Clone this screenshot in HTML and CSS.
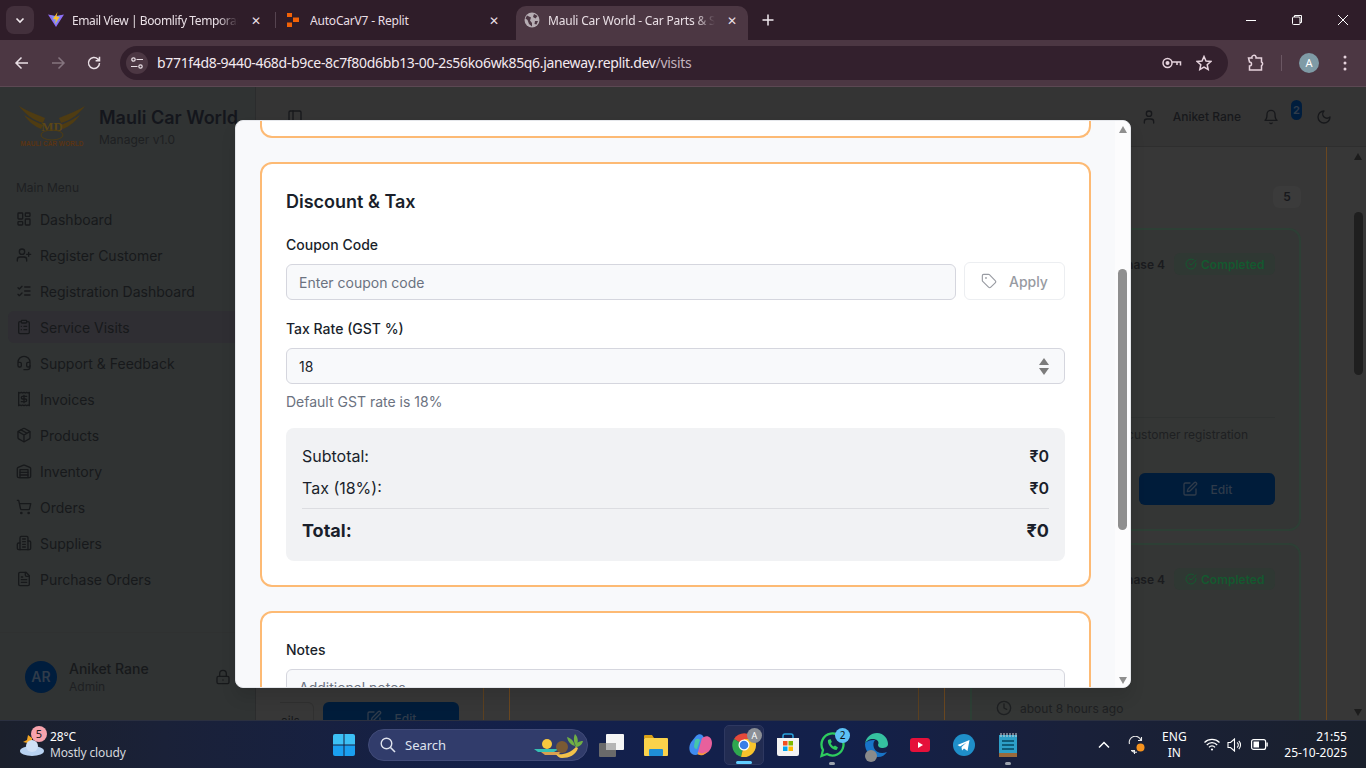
FILE: index.html
```html
<!DOCTYPE html>
<html lang="en">
<head>
    <meta charset="UTF-8">
    <meta name="viewport" content="width=device-width, initial-scale=1.0">
    <title>Mauli Car World - Car Parts &amp; Service</title>
    <link rel="stylesheet" href="styles.css">
</head>
<body>
    <svg class="sprite" xmlns="http://www.w3.org/2000/svg">
        <symbol id="i-dashboard" viewBox="0 0 24 24"><rect x="3" y="3" width="7" height="9" rx="1"/><rect x="14" y="3" width="7" height="5" rx="1"/><rect x="14" y="12" width="7" height="9" rx="1"/><rect x="3" y="16" width="7" height="5" rx="1"/></symbol>
        <symbol id="i-user-plus" viewBox="0 0 24 24"><path d="M16 21v-2a4 4 0 0 0-4-4H6a4 4 0 0 0-4 4v2"/><circle cx="9" cy="7" r="4"/><path d="M19 8v6M22 11h-6"/></symbol>
        <symbol id="i-list-checks" viewBox="0 0 24 24"><path d="m3 17 2 2 4-4M3 7l2 2 4-4M13 6h8M13 12h8M13 18h8"/></symbol>
        <symbol id="i-clipboard" viewBox="0 0 24 24"><rect x="8" y="2" width="8" height="4" rx="1"/><path d="M16 4h2a2 2 0 0 1 2 2v14a2 2 0 0 1-2 2H6a2 2 0 0 1-2-2V6a2 2 0 0 1 2-2h2M12 11h4M12 16h4M8 11h.01M8 16h.01"/></symbol>
        <symbol id="i-headset" viewBox="0 0 24 24"><path d="M3 11h3a2 2 0 0 1 2 2v3a2 2 0 0 1-2 2H5a2 2 0 0 1-2-2v-5Zm0 0a9 9 0 1 1 18 0m0 0v5a2 2 0 0 1-2 2h-1a2 2 0 0 1-2-2v-3a2 2 0 0 1 2-2h3Z"/><path d="M21 16v2a4 4 0 0 1-4 4h-5"/></symbol>
        <symbol id="i-receipt" viewBox="0 0 24 24"><path d="M4 2v20l2-1 2 1 2-1 2 1 2-1 2 1 2-1 2 1V2l-2 1-2-1-2 1-2-1-2 1-2-1-2 1Z"/><path d="M16 8h-6a2 2 0 1 0 0 4h4a2 2 0 1 1 0 4H8M12 17.5v-11"/></symbol>
        <symbol id="i-package" viewBox="0 0 24 24"><path d="M11 21.73a2 2 0 0 0 2 0l7-4A2 2 0 0 0 21 16V8a2 2 0 0 0-1-1.73l-7-4a2 2 0 0 0-2 0l-7 4A2 2 0 0 0 3 8v8a2 2 0 0 0 1 1.73z"/><path d="M12 22V12M3.29 7 12 12l8.71-5M7.5 4.27l9 5.15"/></symbol>
        <symbol id="i-warehouse" viewBox="0 0 24 24"><path d="M22 8.35V20a2 2 0 0 1-2 2H4a2 2 0 0 1-2-2V8.35A2 2 0 0 1 3.26 6.5l8-3.2a2 2 0 0 1 1.48 0l8 3.2A2 2 0 0 1 22 8.35Z"/><path d="M6 18h12M6 14h12"/><rect x="6" y="10" width="12" height="12"/></symbol>
        <symbol id="i-cart" viewBox="0 0 24 24"><circle cx="8" cy="21" r="1"/><circle cx="19" cy="21" r="1"/><path d="M2.05 2.05h2l2.66 12.42a2 2 0 0 0 2 1.58h9.78a2 2 0 0 0 1.95-1.57l1.65-7.43H5.12"/></symbol>
        <symbol id="i-building" viewBox="0 0 24 24"><path d="M6 22V4a2 2 0 0 1 2-2h8a2 2 0 0 1 2 2v18Z"/><path d="M6 12H4a2 2 0 0 0-2 2v6a2 2 0 0 0 2 2h2M18 9h2a2 2 0 0 1 2 2v9a2 2 0 0 1-2 2h-2M10 6h4M10 10h4M10 14h4M10 18h4"/></symbol>
        <symbol id="i-file" viewBox="0 0 24 24"><path d="M15 2H6a2 2 0 0 0-2 2v16a2 2 0 0 0 2 2h12a2 2 0 0 0 2-2V7Z"/><path d="M14 2v4a2 2 0 0 0 2 2h4M10 9H8M16 13H8M16 17H8"/></symbol>
        <symbol id="i-lock" viewBox="0 0 24 24"><rect x="3" y="11" width="18" height="11" rx="2"/><path d="M7 11V7a5 5 0 0 1 10 0v4M12 16.5h.01"/></symbol>
        <symbol id="i-user" viewBox="0 0 24 24"><path d="M19 21v-2a4 4 0 0 0-4-4H9a4 4 0 0 0-4 4v2"/><circle cx="12" cy="7" r="4"/></symbol>
        <symbol id="i-bell" viewBox="0 0 24 24"><path d="M6 8a6 6 0 0 1 12 0c0 7 3 9 3 9H3s3-2 3-9M10.3 21a1.94 1.94 0 0 0 3.4 0"/></symbol>
        <symbol id="i-moon" viewBox="0 0 24 24"><path d="M12 3a6 6 0 0 0 9 9 9 9 0 1 1-9-9Z"/></symbol>
        <symbol id="i-panel" viewBox="0 0 24 24"><rect x="3" y="3" width="18" height="18" rx="2"/><path d="M9 3v18"/></symbol>
        <symbol id="i-tag" viewBox="0 0 24 24"><path d="M12.586 2.586A2 2 0 0 0 11.172 2H4a2 2 0 0 0-2 2v7.172a2 2 0 0 0 .586 1.414l8.704 8.704a2.426 2.426 0 0 0 3.42 0l6.58-6.58a2.426 2.426 0 0 0 0-3.42z"/><circle cx="7.5" cy="7.5" r=".5"/></symbol>
        <symbol id="i-check" viewBox="0 0 24 24"><path d="M21.801 10A10 10 0 1 1 17 3.335M9 11l3 3L22 4"/></symbol>
        <symbol id="i-edit" viewBox="0 0 24 24"><path d="M12 3H5a2 2 0 0 0-2 2v14a2 2 0 0 0 2 2h14a2 2 0 0 0 2-2v-7"/><path d="M18.375 2.625a1 1 0 0 1 3 3l-9.013 9.014a2 2 0 0 1-.853.505l-2.873.84a.5.5 0 0 1-.62-.62l.84-2.873a2 2 0 0 1 .506-.852z"/></symbol>
        <symbol id="i-clock" viewBox="0 0 24 24"><circle cx="12" cy="12" r="10"/><path d="M12 6v6l4 2"/></symbol>
    </svg>

    <!-- browser tabs -->
    <div class="tabstrip">
        <div class="tab-search">
            <svg width="12" height="12" viewBox="0 0 12 12"><path d="M2.5 4.5 6 8l3.5-3.5" fill="none" stroke="#f1e9ee" stroke-width="1.6"/></svg>
        </div>
        <div class="tab tab-first">
            <svg class="favicon" width="16" height="16" viewBox="0 0 16 16"><path d="M0 2.5 8 15 16 2.5 8 4Z" fill="#8f6cf6"/><path d="M3 3.5 8 13l5-9.5-5 1Z" fill="#5ecbf5" opacity=".45"/><path d="M9.5 0 5 7l3 .6L7 12l4.500-7-3-.4Z" fill="#fbc02d"/></svg>
            <span class="tab-title">Email View | Boomlify Temporary Mail</span>
            <span class="tab-close">✕</span>
        </div>
        <div class="tab-sep"></div>
        <div class="tab tab-second">
            <svg class="favicon" width="16" height="16" viewBox="0 0 16 16"><path d="M2 1h5v4H2ZM8 5.500h6V10H8ZM2 10.500h5V15H2Z" fill="#f26207"/></svg>
            <span class="tab-title">AutoCarV7 - Replit</span>
            <span class="tab-close">✕</span>
        </div>
        <div class="tab tab-active">
            <svg class="favicon" width="16" height="16" viewBox="0 0 16 16"><circle cx="8" cy="8" r="7.500" fill="#b6adb3"/><path d="M3 3.500 7 5.500 6 8.500 8 11v3.500L5 12 3.500 8 1.500 6.500ZM10 2l3.500 2-2 2.500-2.500-1.500ZM11 9h3l-1.500 3.500L10.500 12Z" fill="#4c3743"/></svg>
            <span class="tab-title">Mauli Car World - Car Parts &amp; Service</span>
            <span class="tab-close">✕</span>
        </div>
        <div class="tab-new">
            <svg width="12" height="12" viewBox="0 0 12 12"><path d="M6 .5v11M.5 6h11" stroke="#f1e9ee" stroke-width="1.500"/></svg>
        </div>
        <div class="win-controls">
            <svg width="12" height="12" viewBox="0 0 12 12"><path d="M1 6.500h10" stroke="#fff"/></svg>
            <svg width="12" height="12" viewBox="0 0 12 12"><rect x="1.500" y="3" width="7.500" height="7.500" rx="1" fill="none" stroke="#fff"/><path d="M3.500 3V1.500h7V8.500H9" fill="none" stroke="#fff"/></svg>
            <svg width="12" height="12" viewBox="0 0 12 12"><path d="M1 1l10 10M11 1 1 11" stroke="#fff"/></svg>
        </div>
    </div>

    <!-- browser toolbar -->
    <div class="toolbar">
        <svg class="tool-btn" width="16" height="16" viewBox="0 0 16 16"><path d="M14 8H2.500M7.500 2.500 2 8l5.500 5.500" fill="none" stroke="#e9dfe5" stroke-width="1.500"/></svg>
        <svg class="tool-btn" width="16" height="16" viewBox="0 0 16 16"><path d="M2 8h11.500M8.500 2.500 14 8l-5.500 5.500" fill="none" stroke="#85757f" stroke-width="1.500"/></svg>
        <svg class="tool-btn" width="16" height="16" viewBox="0 0 16 16"><path d="M13.500 8a5.500 5.500 0 1 1-1.600-3.900L13.500 5.700M13.500 1.800v3.900H9.600" fill="none" stroke="#e9dfe5" stroke-width="1.500"/></svg>
        <div class="omnibox">
            <div class="site-info">
                <svg width="14" height="14" viewBox="0 0 14 14"><g fill="none" stroke="#e9dfe5" stroke-width="1.200"><circle cx="3.500" cy="3.500" r="1.700"/><path d="M6.500 3.500H13M1 10.500h6.500"/><circle cx="10.500" cy="10.500" r="1.700"/></g></svg>
            </div>
            <span class="url">b771f4d8-9440-468d-b9ce-8c7f80d6bb13-00-2s56ko6wk85q6.janeway.replit.dev<span class="url-path">/visits</span></span>
            <svg class="omni-icon" width="20" height="12" viewBox="0 0 20 12"><g fill="none" stroke="#e6d3dd" stroke-width="1.500"><circle cx="5.500" cy="6" r="4.500"/><path d="M10 5h8.500v3.500M15 5v3"/></g><circle cx="5.500" cy="6" r="2" fill="#e6d3dd"/></svg>
            <svg class="omni-icon star" width="16" height="16" viewBox="0 0 16 16"><path d="m8 1.500 2 4.500 4.800.5-3.600 3.200 1 4.800L8 12.100l-4.200 2.400 1-4.800L1.200 6.500 6 6Z" fill="none" stroke="#e6d3dd" stroke-width="1.500"/></svg>
        </div>
        <svg class="ext-icon" width="18" height="18" viewBox="0 0 18 18"><path d="M2.500 4H6a2 2 0 0 1 4-1.200V4h5.500v4a2 2 0 0 1 0 3.600V16h-12v-4a2 2 0 0 0 0-4Z" fill="none" stroke="#e6d3dd" stroke-width="1.500"/></svg>
        <div class="tool-sep"></div>
        <div class="profile">A</div>
        <svg class="menu-dots" width="4" height="16" viewBox="0 0 4 16"><g fill="#e6d3dd"><circle cx="2" cy="2" r="1.500"/><circle cx="2" cy="8" r="1.500"/><circle cx="2" cy="14" r="1.500"/></g></svg>
    </div>

    <div class="app">
        <aside class="sidebar">
            <div class="brand">
                <svg class="logo" width="68" height="44" viewBox="0 0 68 44">
                    <g fill="#4f3c12">
                        <path d="M1 1c8 5 17 8 26 12l-2 5C15 15 7 9 1 1Z"/>
                        <path d="M6 10c6 4 12 7 19 10l-2 4C16 21 10 16 6 10Z"/>
                        <path d="M67 1c-8 5-17 8-26 12l2 5c10-3 18-9 24-17Z"/>
                        <path d="M62 10c-6 4-12 7-19 10l2 4c7-3 13-8 17-14Z"/>
                    </g>
                    <text x="34" y="26" class="logo-md">MD</text>
                    <ellipse cx="34" cy="30" rx="11" ry="5" fill="none" stroke="#4f3c12"/>
                    <text x="34" y="41" class="logo-name">MAULI CAR WORLD</text>
                </svg>
                <div class="brand-text">
                    <div class="brand-title">Mauli Car World</div>
                    <div class="brand-sub">Manager v1.0</div>
                </div>
            </div>
            <nav class="nav">
                <div class="nav-label">Main Menu</div>
                <a class="nav-item"><svg class="icon"><use href="#i-dashboard"/></svg>Dashboard</a>
                <a class="nav-item"><svg class="icon"><use href="#i-user-plus"/></svg>Register Customer</a>
                <a class="nav-item"><svg class="icon"><use href="#i-list-checks"/></svg>Registration Dashboard</a>
                <a class="nav-item active"><svg class="icon"><use href="#i-clipboard"/></svg>Service Visits</a>
                <a class="nav-item"><svg class="icon"><use href="#i-headset"/></svg>Support &amp; Feedback</a>
                <a class="nav-item"><svg class="icon"><use href="#i-receipt"/></svg>Invoices</a>
                <a class="nav-item"><svg class="icon"><use href="#i-package"/></svg>Products</a>
                <a class="nav-item"><svg class="icon"><use href="#i-warehouse"/></svg>Inventory</a>
                <a class="nav-item"><svg class="icon"><use href="#i-cart"/></svg>Orders</a>
                <a class="nav-item"><svg class="icon"><use href="#i-building"/></svg>Suppliers</a>
                <a class="nav-item"><svg class="icon"><use href="#i-file"/></svg>Purchase Orders</a>
                <div class="nav-label nav-label-next">Management</div>
            </nav>
            <div class="side-user">
                <div class="avatar">AR</div>
                <div class="side-user-text">
                    <div class="side-user-name">Aniket Rane</div>
                    <div class="side-user-role">Admin</div>
                </div>
                <svg class="icon lock"><use href="#i-lock"/></svg>
            </div>
        </aside>

        <main class="main">
            <header class="main-head">
                <svg class="icon panel-btn"><use href="#i-panel"/></svg>
                <svg class="icon"><use href="#i-user"/></svg>
                <span class="head-user">Aniket Rane</span>
                <svg class="icon bell"><use href="#i-bell"/></svg>
                <span class="bell-badge">2</span>
                <svg class="icon moon"><use href="#i-moon"/></svg>
            </header>
            <div class="main-body">
                <div class="board">
                    <section class="col col-a">
                        <div class="visit visit-orange visit-tall">
                            <div class="visit-foot">
                                <span class="btn-details">ails</span>
                                <span class="btn-edit"><svg class="icon"><use href="#i-edit"/></svg>Edit</span>
                            </div>
                        </div>
                    </section>
                    <section class="col col-b">
                        <div class="visit visit-orange visit-tall"></div>
                    </section>
                    <section class="col col-c">
                        <div class="col-head"><span class="count">5</span></div>
                        <div class="visit visit-green">
                            <div class="visit-top">
                                <span class="phase">Phase 4</span>
                                <span class="status"><svg class="icon"><use href="#i-check"/></svg>Completed</span>
                            </div>
                            <div class="visit-note">New customer registration</div>
                            <div class="visit-actions">
                                <span class="btn-edit"><svg class="icon"><use href="#i-edit"/></svg>Edit</span>
                            </div>
                        </div>
                        <div class="visit visit-green visit-last">
                            <div class="visit-top">
                                <span class="phase">Phase 4</span>
                                <span class="status"><svg class="icon"><use href="#i-check"/></svg>Completed</span>
                            </div>
                            <div class="visit-time"><svg class="icon"><use href="#i-clock"/></svg>about 8 hours ago</div>
                        </div>
                    </section>
                </div>
                <div class="page-scroll">
                    <span class="arrow-up"></span>
                    <span class="page-thumb"></span>
                    <span class="arrow-down"></span>
                </div>
            </div>
        </main>

        <!-- dialog over the page -->
        <div class="modal">
            <div class="modal-body">
                <div class="card card-stub"></div>
                <div class="card">
                    <h2 class="card-title">Discount &amp; Tax</h2>
                    <label class="field-label">Coupon Code</label>
                    <div class="coupon-row">
                        <div class="input input-grow placeholder">Enter coupon code</div>
                        <div class="btn-apply"><svg class="icon tag"><use href="#i-tag"/></svg>Apply</div>
                    </div>
                    <label class="field-label tax-label">Tax Rate (GST %)</label>
                    <div class="input input-select">
                        18
                        <span class="spinner"><span class="arrow-up"></span><span class="arrow-down"></span></span>
                    </div>
                    <p class="helper">Default GST rate is 18%</p>
                    <div class="summary">
                        <div class="summary-row"><span>Subtotal:</span><strong>₹0</strong></div>
                        <div class="summary-row"><span>Tax (18%):</span><strong>₹0</strong></div>
                        <div class="summary-row summary-total"><span>Total:</span><span>₹0</span></div>
                    </div>
                </div>
                <div class="card">
                    <label class="field-label notes-label">Notes</label>
                    <div class="input notes placeholder">Additional notes</div>
                </div>
            </div>
            <div class="modal-scroll">
                <span class="arrow-up"></span>
                <span class="modal-thumb"></span>
                <span class="arrow-down"></span>
            </div>
        </div>
    </div>

    <!-- windows taskbar -->
    <footer class="taskbar">
        <div class="weather">
            <div class="weather-icon">
                <svg width="26" height="26" viewBox="0 0 26 26"><path d="M5 11 9 9l1-5 4 3v6Z" fill="#f5a623"/><ellipse cx="14" cy="20" rx="12" ry="5" fill="#b9d3f2"/><circle cx="14" cy="15" r="6" fill="#cfe0f6"/></svg>
                <span class="weather-badge">5</span>
            </div>
            <div class="weather-text">
                <div class="weather-temp">28°C</div>
                <div>Mostly cloudy</div>
            </div>
        </div>
        <div class="slot">
            <svg width="24" height="24" viewBox="0 0 24 24"><g fill="#3cc0f5"><path d="M1 3a2 2 0 0 1 2-2h8.500v10.500H1Z"/><path d="M12.500 1H21a2 2 0 0 1 2 2v8.500H12.500Z"/></g><g fill="#1a9ff0"><path d="M1 12.500h10.500V23H3a2 2 0 0 1-2-2Z"/><path d="M12.500 12.500H23V21a2 2 0 0 1-2 2h-8.500Z"/></g></svg>
        </div>
        <div class="search">
            <svg width="16" height="16" viewBox="0 0 16 16"><circle cx="6.500" cy="6.500" r="5.300" fill="none" stroke="#dfe3ee" stroke-width="1.400"/><path d="m10.500 10.500 4.500 4.500" stroke="#dfe3ee" stroke-width="1.600"/></svg>
            <span>Search</span>
            <svg class="search-art" width="50" height="26" viewBox="0 0 50 26"><path d="M0 17h25l-5 3H4Z" fill="#35c0b4"/><path d="M7 20h20l-3 3H11Z" fill="#d9a050"/><circle cx="13" cy="12" r="5" fill="#f7c83f"/><path d="M41 2c3 3 4 8 1 12-2-3-3-8-1-12ZM49 9c-1 4-4 6-8 6 1-4 4-6 8-6ZM33 5c4 1 7 4 8 9-4-1-7-4-8-9Z" fill="#6fae45"/><circle cx="28" cy="15" r="6" fill="#7a5a34"/><path d="M22 22c8 1 14-1 20-7l2 1c-2 7-9 10-16 10-3 0-5-2-6-4Z" fill="#f2c14a"/></svg>
        </div>
        <div class="slot">
            <svg width="26" height="24" viewBox="0 0 26 24"><rect x="0" y="10" width="17" height="14" rx="1" fill="#6a6a6a"/><rect x="7" y="1" width="18" height="16" rx="1" fill="#f5f5f5"/><rect x="7" y="10" width="10" height="7" fill="#b5b5b5"/></svg>
        </div>
        <div class="slot">
            <svg width="24" height="22" viewBox="0 0 24 22"><path d="M0 2a1 1 0 0 1 1-1h7l2 3H0Z" fill="#d9a017"/><rect y="4" width="24" height="18" rx="1" fill="#fad24b"/><rect x="5" y="15" width="14" height="7" rx="1" fill="#1f8fd6"/></svg>
        </div>
        <div class="slot">
            <svg width="24" height="24" viewBox="0 0 24 24"><path d="M8 3c3-3 7-2 8 2l-4 14c-1 3-5 4-8 2C0 18 1 11 4 8Z" fill="#3f8cf0"/><path d="M16 4c4-2 8 1 8 6 0 5-3 10-8 11-3 1-5 0-6-2l4-14Z" fill="#e8609c"/><path d="M10 19c3 2 6 2 9-1-1 3-4 5-7 4-2 0-3-1-2-3Z" fill="#f59b3a"/><path d="M7 7c2-2 4-1 5 0l-3 9c-2 0-3-1-3-3Z" fill="#46c7a8"/></svg>
        </div>
        <div class="slot slot-active">
            <svg width="24" height="24" viewBox="0 0 24 24"><path d="M12 12 2 6a12 12 0 0 1 20.500 0Z" fill="#e5493a"/><path d="M12 12 2 6a12 12 0 0 0 7 17.800Z" fill="#2fa84f"/><path d="M12 12h12A12 12 0 0 1 9 23.800Z" fill="#f8c42c"/><path d="M12 6h10.500A12 12 0 0 1 24 12H12Z" fill="#f8c42c"/><circle cx="12" cy="12" r="5.500" fill="#fff"/><circle cx="12" cy="12" r="4.300" fill="#3a7ee8"/></svg>
            <span class="slot-avatar">A</span>
            <span class="slot-bar"></span>
        </div>
        <div class="slot">
            <svg width="24" height="24" viewBox="0 0 24 24"><path d="M7 5V3a2 2 0 0 1 2-2h6a2 2 0 0 1 2 2v2" fill="none" stroke="#2aa3dd" stroke-width="1.500"/><path d="M1 5h22v16a2 2 0 0 1-2 2H3a2 2 0 0 1-2-2Z" fill="#f3f3f3"/><rect x="7" y="8" width="4.500" height="4.500" fill="#f25022"/><rect x="12.500" y="8" width="4.500" height="4.500" fill="#7fba00"/><rect x="7" y="13.500" width="4.500" height="4.500" fill="#00a4ef"/><rect x="12.500" y="13.500" width="4.500" height="4.500" fill="#ffb900"/></svg>
        </div>
        <div class="slot">
            <svg width="26" height="26" viewBox="0 0 26 26"><path d="M2.500 24 4 18A11 11 0 1 1 8 22Z" fill="none" stroke="#2ecc5e" stroke-width="2.300"/><path d="M9 8c-1 4 4 10 8.500 10l1.500-2.500-3-2-1.300 1c-1.300-.5-2.700-2-3-3.200l1.200-1.300L11.500 7Z" fill="#2ecc5e"/></svg>
            <span class="slot-count">2</span>
            <span class="slot-dot"></span>
        </div>
        <div class="slot">
            <svg width="24" height="24" viewBox="0 0 24 24"><path d="M1 11C2 4 7 0 13 0c7 0 11 6 11 11 0 3-3 4-6 4-2 0-4-1-4-3 2-4-2-6-5-6-4 0-7 2-8 5Z" fill="#35c1a0"/><path d="M1 11c0 7 5 13 13 13 4 0 7-2 9-5-5 2-11 1-13-4-1-3-1-6 1-8-5 0-9 1-10 4Z" fill="#1874c8"/></svg>
            <span class="edge-user"></span>
        </div>
        <div class="slot">
            <svg width="20" height="14" viewBox="0 0 20 14"><rect width="20" height="14" rx="3" fill="#e5103a"/><path d="m8 4 5 3-5 3Z" fill="#fff"/></svg>
        </div>
        <div class="slot">
            <svg width="22" height="22" viewBox="0 0 22 22"><circle cx="11" cy="11" r="11" fill="#1f8fc9"/><path d="m4.500 11 12-5-2 11-3.500-2.500-2 2-.5-3.500 5-4.500-6.500 4Z" fill="#fff"/></svg>
        </div>
        <div class="slot">
            <svg width="18" height="24" viewBox="0 0 18 24"><rect y="2" width="18" height="22" fill="#2d9fc8"/><rect y="20" width="18" height="4" fill="#9a6a3c"/><g fill="#0e5c7a"><rect x="3" y="7" width="12" height="2"/><rect x="3" y="11" width="12" height="2"/><rect x="3" y="15" width="12" height="2"/></g><path d="M2 0v4M5 0v4M8 0v4M11 0v4M14 0v4M17 0v4" stroke="#cfd8dc"/></svg>
            <span class="slot-dot"></span>
        </div>
        <div class="tray">
            <svg class="tray-chevron" width="12" height="8" viewBox="0 0 12 8"><path d="m1 6.500 5-5 5 5" fill="none" stroke="#fff" stroke-width="1.500"/></svg>
            <svg class="tray-sync" width="18" height="18" viewBox="0 0 18 18"><g fill="none" stroke="#e8e8e8" stroke-width="1.100"><path d="M1.500 8A6 6 0 0 1 13 4.500M13.500 1v3.500H10M3 14.500h3.500V18"/><path d="M3.500 14.500A6 6 0 0 0 9 16"/></g><circle cx="12.500" cy="11.500" r="4" fill="#f7931e"/></svg>
            <div class="tray-lang">ENG<br>IN</div>
            <svg class="tray-wifi" width="16" height="13" viewBox="0 0 16 13"><g fill="none" stroke="#fff" stroke-width="1.200"><path d="M.5 4.500a10.500 10.500 0 0 1 15 0M2.800 7a7 7 0 0 1 10.400 0M5 9.300a3.800 3.800 0 0 1 6 0"/></g><circle cx="8" cy="11.500" r="1.100" fill="#fff"/></svg>
            <svg class="tray-sound" width="16" height="14" viewBox="0 0 16 14"><g fill="none" stroke="#fff" stroke-width="1.100"><path d="M1 4.500h2.500L7.500 1v12l-4-3.500H1Z"/><path d="M10 4.500a3 3 0 0 1 0 5M11.800 2.800a6 6 0 0 1 0 8.400"/></g></svg>
            <svg class="tray-battery" width="17" height="11" viewBox="0 0 17 11"><rect x=".6" y=".6" width="14" height="9.800" rx="2" fill="none" stroke="#fff" stroke-width="1.200"/><rect x="2.500" y="2.500" width="5.500" height="6" fill="#fff"/><rect x="15.400" y="3.500" width="1.400" height="4" fill="#fff"/></svg>
            <div class="tray-clock">21:55<br>25-10-2025</div>
        </div>
    </footer>
</body>
</html>
```
FILE: styles.css
```css
* {
    box-sizing: border-box;
}

body {
    margin: 0;
    width: 1366px;
    height: 768px;
    overflow: hidden;
    display: flex;
    flex-direction: column;
    font-family: Inter, "Liberation Sans", sans-serif;
    background-color: #343434;
}

.sprite {
    position: absolute;
    width: 0;
    height: 0;
}

.icon {
    width: 16px;
    height: 16px;
    flex: none;
    fill: none;
    stroke: currentColor;
    stroke-width: 2;
    stroke-linecap: round;
    stroke-linejoin: round;
}

/* browser chrome */
.tabstrip {
    height: 40px;
    flex: none;
    display: flex;
    align-items: flex-end;
    background-color: #2f1d29;
    font-family: "Noto Sans", sans-serif;
    font-size: 12px;
    letter-spacing: -0.2px;
    color: #e9dfe5;
}

.tab-search {
    width: 28px;
    height: 28px;
    margin: 0 0 6px 6px;
    display: flex;
    align-items: center;
    justify-content: center;
    background-color: #43303c;
    border-radius: 8px;
}

.tab {
    height: 34px;
    display: flex;
    align-items: center;
    flex: none;
    padding-bottom: 6px;
}

.favicon {
    flex: none;
}

.tab-title {
    white-space: nowrap;
    overflow: hidden;
    -webkit-mask-image: linear-gradient(to right, #000 88%, transparent);
    mask-image: linear-gradient(to right, #000 88%, transparent);
}

.tab-close {
    font-size: 12px;
    width: 12px;
    text-align: center;
    flex: none;
}

.tab-first {
    width: 224px;
    margin-left: 14px;
}

.tab-first .tab-title {
    width: 166px;
    margin: 0 12px 0 8px;
    letter-spacing: -0.4px;
}

.tab-sep {
    width: 1px;
    height: 16px;
    margin: 0 0 12px 3px;
    background-color: #564450;
}

.tab-second {
    width: 225px;
    margin-left: 9px;
}

.tab-second .tab-title {
    width: 166px;
    margin: 0 12px 0 9px;
    -webkit-mask-image: none;
    mask-image: none;
}

.tab-active {
    width: 232px;
    height: 34px;
    margin-left: 6px;
    padding: 0 10px 6px 8px;
    background-color: #4c3743;
    border-radius: 10px 10px 0 0;
}

.tab-active .tab-title {
    width: 167px;
    margin: 0 11px 0 8px;
}

.tab-new {
    width: 12px;
    height: 12px;
    margin: 0 0 14px 14px;
    display: flex;
}

.win-controls {
    margin-left: auto;
    height: 40px;
    display: flex;
    align-items: center;
    gap: 34px;
    padding-right: 17px;
}

.toolbar {
    height: 47px;
    flex: none;
    display: flex;
    align-items: center;
    padding: 0 0 1px 14px;
    background-color: #4c3743;
    border-bottom: 1px solid #5c4853;
}

.tool-btn {
    flex: none;
    margin-right: 20px;
}

.omnibox {
    width: 1108px;
    height: 34px;
    margin-left: -2px;
    display: flex;
    align-items: center;
    padding: 0 16px 0 6px;
    background-color: #33202d;
    border-radius: 17px;
}

.site-info {
    width: 22px;
    height: 22px;
    flex: none;
    display: flex;
    align-items: center;
    justify-content: center;
    background-color: #4c3743;
    border-radius: 50%;
}

.url {
    margin-left: 9px;
    font-family: "Noto Sans", sans-serif;
    font-size: 14px;
    color: #f3eaf0;
    white-space: nowrap;
    letter-spacing: -0.33px;
}

.url-path {
    color: #c4b3bd;
}

.omni-icon {
    flex: none;
    margin-left: auto;
}

.omni-icon.star {
    margin-left: 14px;
}

.ext-icon {
    margin-left: 18px;
    flex: none;
}

.tool-sep {
    width: 1px;
    height: 16px;
    margin-left: 17px;
    background-color: #6b5763;
}

.profile {
    width: 20px;
    height: 20px;
    margin-left: 17px;
    border-radius: 50%;
    background-color: #7f9ba6;
    color: #fff;
    font-family: "Noto Sans", sans-serif;
    font-size: 11px;
    line-height: 20px;
    text-align: center;
}

.menu-dots {
    margin-left: 24px;
}

/* page behind the dialog, already dimmed */
.app {
    flex: 1;
    min-height: 0;
    display: flex;
    position: relative;
    overflow: hidden;
    background-color: #373737;
}

.sidebar {
    width: 256px;
    flex: none;
    display: flex;
    flex-direction: column;
    background-color: #303333;
    border-right: 1px solid #2b2c2d;
}

.brand {
    height: 78px;
    flex: none;
    display: flex;
    padding: 18px 0 0 18px;
    gap: 13px;
}

.logo {
    flex: none;
}

.logo-md {
    font-family: "Liberation Serif", serif;
    font-size: 13px;
    font-weight: bold;
    fill: #5c4715;
    text-anchor: middle;
}

.logo-name {
    font-family: "Liberation Sans", sans-serif;
    font-size: 6.500px;
    font-weight: bold;
    fill: #5a3312;
    text-anchor: middle;
}

.brand-title {
    font-size: 18px;
    font-weight: 600;
    line-height: 26px;
    color: #14161c;
    white-space: nowrap;
}

.brand-sub {
    margin-top: 1px;
    font-size: 12px;
    line-height: 16px;
    color: #1e2022;
}

.nav {
    flex: 1;
    min-height: 0;
    overflow: hidden;
    padding: 0 8px;
    border-bottom: 1px solid #2f3131;
}

.nav-label {
    height: 38px;
    margin-left: 8px;
    padding-top: 6px;
    font-size: 12px;
    line-height: 34px;
    color: #1e2022;
}

.nav-label-next {
    margin-top: 27px;
    height: 20px;
    padding-top: 0;
    line-height: 30px;
}

.nav-item {
    height: 32px;
    margin-bottom: 4px;
    display: flex;
    align-items: center;
    gap: 8px;
    padding-left: 8px;
    font-size: 14px;
    color: #17191b;
    border-radius: 6px;
}

.nav-item.active {
    background-color: #2f2e33;
}

.side-user {
    height: 87px;
    flex: none;
    display: flex;
    align-items: center;
    padding: 0 25px;
}

.avatar {
    width: 32px;
    height: 32px;
    flex: none;
    border-radius: 50%;
    background-color: #001d3d;
    color: #2f3b4a;
    font-size: 14px;
    font-weight: 600;
    line-height: 32px;
    text-align: center;
}

.side-user-text {
    margin-left: 12px;
}

.side-user-name {
    font-size: 14px;
    font-weight: 500;
    line-height: 20px;
    color: #17191b;
}

.side-user-role {
    font-size: 12px;
    line-height: 16px;
    color: #1e2022;
}

.lock {
    margin-left: auto;
    margin-right: -1px;
    color: #17191b;
}

.main {
    flex: 1;
    min-width: 0;
    display: flex;
    flex-direction: column;
}

.main-head {
    height: 60px;
    flex: none;
    display: flex;
    align-items: center;
    padding: 0 34px 0 31px;
    background-color: #343434;
    border-bottom: 1px solid #2e2e2e;
    color: #17181b;
}

.panel-btn {
    margin-right: auto;
}

.head-user {
    margin: 0 22px 0 16px;
    font-size: 12px;
    font-weight: 500;
}

.bell-badge {
    width: 11px;
    height: 20px;
    margin: -14px 14px 0 12px;
    border-radius: 6px;
    background-color: #001d3d;
    color: #2f3b4a;
    font-size: 11px;
    font-weight: 700;
    line-height: 20px;
    text-align: center;
}

.main-body {
    flex: 1;
    min-height: 0;
    display: flex;
}

.board {
    flex: 1;
    display: flex;
    overflow: hidden;
}

.col {
    flex: none;
    height: 100%;
    border-right: 1px solid #6a4720;
}

.col-a {
    width: 254px;
    padding-right: 25px;
}

.col-b {
    width: 435px;
    padding: 0 25px 0 26px;
}

.col-c {
    width: 382px;
    padding: 0 25px;
}

.col-head {
    height: 81px;
    display: flex;
    justify-content: flex-end;
    align-items: flex-start;
    padding-top: 39px;
}

.count {
    width: 28px;
    height: 22px;
    border-radius: 6px;
    background-color: #3b3b3b;
    color: #17181b;
    font-size: 12px;
    font-weight: 600;
    line-height: 22px;
    text-align: center;
}

.visit {
    height: 303px;
    margin-bottom: 12px;
    padding: 23px 24px 0;
    border: 2px solid #2d3f35;
    border-radius: 12px;
    background-color: #343635;
    color: #1d1f21;
}

.visit-orange {
    border-width: 1px;
    border-color: #5b4020;
    background-color: #373737;
}

.visit-tall {
    height: 800px;
    padding: 555px 24px 0 24px;
    border-top: none;
    border-left: none;
    border-radius: 0;
}

.visit-foot {
    display: flex;
    justify-content: flex-end;
    gap: 9px;
}

.btn-details {
    width: 34px;
    height: 32px;
    padding: 8px 0 0 1px;
    border: 1px solid #303030;
    border-left: none;
    border-radius: 0 6px 6px 0;
    font-size: 12px;
    line-height: 20px;
    color: #16171a;
}

.btn-edit {
    width: 136px;
    height: 32px;
    display: flex;
    align-items: center;
    justify-content: center;
    gap: 13px;
    border-radius: 6px;
    background-color: #001c3a;
    color: #2f3b4a;
    font-size: 12px;
    font-weight: 500;
}

.visit-top {
    display: flex;
    justify-content: flex-end;
    align-items: center;
    gap: 9px;
}

.phase {
    font-size: 12px;
    font-weight: 600;
    color: #1a1b1e;
}

.status {
    width: 101px;
    height: 22px;
    display: flex;
    align-items: center;
    gap: 4px;
    padding-left: 11px;
    border-radius: 6px;
    background-color: #2f3833;
    color: #14592f;
    font-size: 12px;
    font-weight: 600;
    white-space: nowrap;
}

.status .icon {
    width: 12px;
    height: 12px;
}

.visit-note {
    margin-top: 142px;
    padding: 9px 27px 0 0;
    border-top: 1px solid #2f3231;
    font-size: 12px;
    line-height: 16px;
    color: #1e2022;
    text-align: right;
}

.visit-actions {
    margin-top: 30px;
    display: flex;
    justify-content: flex-end;
}

.visit-last {
    height: 400px;
}

.visit-time {
    margin-top: 110px;
    display: flex;
    align-items: center;
    gap: 8px;
    font-size: 12px;
    color: #1e2022;
}

.page-scroll {
    width: 16px;
    flex: none;
    display: flex;
    flex-direction: column;
    align-items: center;
    padding: 6px 0 4px;
}

.arrow-up,
.arrow-down {
    width: 0;
    height: 0;
    flex: none;
    display: block;
    border-left: 4.500px solid transparent;
    border-right: 4.500px solid transparent;
}

.arrow-up {
    border-bottom: 7px solid #1c1c1c;
}

.arrow-down {
    margin-top: auto;
    border-top: 7px solid #1c1c1c;
}

.page-thumb {
    width: 9px;
    height: 163px;
    margin-top: 52px;
    border-radius: 5px;
    background-color: #1f1f1f;
}

/* dialog */
.modal {
    position: absolute;
    left: 235px;
    top: 33px;
    width: 896px;
    height: 568px;
    display: flex;
    overflow: hidden;
    background-color: #f8f9fb;
    border: 1px solid #e5e7eb;
    border-radius: 8px;
    box-shadow: 0 10px 15px rgba(0, 0, 0, 0.1);
}

.modal-body {
    flex: 1;
    min-width: 0;
    overflow: hidden;
    padding: 0 23px 0 24px;
}

.card {
    width: 831px;
    margin-bottom: 24px;
    padding: 24px;
    background-color: #fff;
    border: 2px solid #fdba74;
    border-radius: 12px;
    color: #1a1f2b;
}

.card-stub {
    height: 17px;
    padding: 0;
    border-top: none;
    border-radius: 0 0 12px 12px;
}

.card-title {
    margin: 0;
    font-size: 18px;
    font-weight: 600;
    line-height: 28px;
}

.field-label {
    display: block;
    margin-top: 19px;
    font-size: 14px;
    font-weight: 500;
    line-height: 20px;
}

.coupon-row {
    display: flex;
    align-items: flex-end;
    gap: 8px;
    margin-top: 7px;
}

.input {
    height: 36px;
    padding: 0 12px;
    display: flex;
    align-items: center;
    background-color: #f8f9fb;
    border: 1px solid #d5d6de;
    border-radius: 6px;
    font-size: 14px;
}

.input-grow {
    flex: 1;
}

.placeholder {
    color: #6b7280;
}

.btn-apply {
    width: 101px;
    height: 38px;
    flex: none;
    display: flex;
    align-items: center;
    gap: 12px;
    padding-left: 16px;
    background-color: #fff;
    border: 1px solid #eceef1;
    border-radius: 6px;
    font-size: 14px;
    font-weight: 500;
    color: #989ba2;
}

.tag {
    color: #989ba2;
    stroke-width: 1.7;
}

.tax-label {
    margin-top: 19px;
}

.input-select {
    margin-top: 9px;
    justify-content: space-between;
    padding-right: 15px;
}

.spinner {
    display: flex;
    flex-direction: column;
    gap: 3px;
}

.spinner .arrow-up {
    border-bottom-color: #7c7c7c;
    border-left-width: 5px;
    border-right-width: 5px;
}

.spinner .arrow-down {
    margin-top: 0;
    border-top-color: #7c7c7c;
    border-left-width: 5px;
    border-right-width: 5px;
}

.helper {
    margin: 8px 0 0;
    font-size: 14px;
    line-height: 20px;
    color: #6b7280;
}

.summary {
    height: 133px;
    margin-top: 16px;
    padding: 12px 16px;
    background-color: #f1f2f4;
    border-radius: 8px;
}

.summary-row {
    height: 32px;
    display: flex;
    justify-content: space-between;
    align-items: center;
    font-size: 16px;
}

.summary-row strong {
    font-weight: 600;
}

.summary-total {
    height: 43px;
    margin-top: 4px;
    border-top: 1px solid #dcdde1;
    font-size: 18px;
    font-weight: 700;
}

.notes-label {
    margin-top: 3px;
}

.notes {
    height: 80px;
    margin-top: 9px;
    align-items: flex-start;
    padding-top: 9px;
}

.modal-scroll {
    width: 15px;
    flex: none;
    display: flex;
    flex-direction: column;
    align-items: center;
    padding: 5px 0 3px;
    background-color: #fcfcfd;
}

.modal-scroll .arrow-up {
    border-bottom-color: #8f8f8f;
}

.modal-scroll .arrow-down {
    border-top-color: #8f8f8f;
}

.modal-thumb {
    width: 9px;
    height: 261px;
    margin-top: 136px;
    border-radius: 5px;
    background-color: #8f8f8f;
}

/* windows taskbar */
.taskbar {
    height: 48px;
    flex: none;
    display: flex;
    align-items: center;
    background: linear-gradient(to right, #1b202c 0, #1a2138 12%, #13204c 40%, #13204a 62%, #19203a 78%, #1a202c 100%);
    border-top: 1px solid #2b3040;
    font-family: "Noto Sans", sans-serif;
    color: #fff;
}

.weather {
    width: 322px;
    flex: none;
    display: flex;
    align-items: center;
    padding-left: 18px;
    font-size: 12px;
    line-height: 16px;
}

.weather-icon {
    width: 32px;
    height: 28px;
    position: relative;
}

.weather-badge {
    position: absolute;
    left: 13px;
    top: -5px;
    width: 16px;
    height: 16px;
    border-radius: 50%;
    background-color: #f7a3ad;
    color: #1a1a1a;
    font-size: 11px;
    line-height: 16px;
    text-align: center;
}

.weather-text {
    color: #d5d8de;
    letter-spacing: -0.15px;
}

.weather-temp {
    color: #fff;
}

.slot {
    width: 44px;
    height: 40px;
    flex: none;
    display: flex;
    align-items: center;
    justify-content: center;
    position: relative;
}

.search {
    width: 220px;
    height: 32px;
    flex: none;
    margin: 0 2px;
    display: flex;
    align-items: center;
    gap: 9px;
    padding-left: 11px;
    background-color: #313c6b;
    border: 1px solid #414b78;
    border-radius: 16px;
    font-size: 13px;
    color: #dfe3ee;
}

.search-art {
    margin-left: auto;
    margin-right: 3px;
}

.slot-active {
    width: 40px;
    margin: 0 2px;
    background-color: #222c52;
    border: 1px solid #2e3860;
    border-radius: 5px;
}

.slot-avatar {
    position: absolute;
    right: 1px;
    top: 2px;
    width: 15px;
    height: 15px;
    border-radius: 50%;
    background-color: #8b8f96;
    color: #fff;
    font-size: 9px;
    line-height: 15px;
    text-align: center;
}

.slot-bar {
    position: absolute;
    left: 11px;
    bottom: 0;
    width: 16px;
    height: 3px;
    border-radius: 2px;
    background-color: #60cdff;
}

.slot-count {
    position: absolute;
    right: 4px;
    top: 3px;
    width: 15px;
    height: 15px;
    border-radius: 50%;
    background-color: #5cc0f5;
    color: #101010;
    font-size: 10px;
    line-height: 15px;
    text-align: center;
}

.slot-dot {
    position: absolute;
    bottom: 0;
    left: 19px;
    width: 6px;
    height: 3px;
    border-radius: 2px;
    background-color: #9ca3ae;
}

.edge-user {
    position: absolute;
    left: 11px;
    bottom: 3px;
    width: 12px;
    height: 12px;
    border-radius: 50%;
    background-color: #8a8a8a;
}

.tray {
    margin-left: auto;
    display: flex;
    align-items: center;
    padding-right: 19px;
    font-size: 12px;
    line-height: 16px;
}

.tray-chevron {
    margin-right: 18px;
}

.tray-sync {
    margin-right: 13px;
}

.tray-lang {
    width: 30px;
    text-align: center;
    margin-right: 15px;
}

.tray-sound {
    margin: 0 8px 0 7px;
}

.tray-clock {
    margin-left: 16px;
    text-align: right;
}
```
